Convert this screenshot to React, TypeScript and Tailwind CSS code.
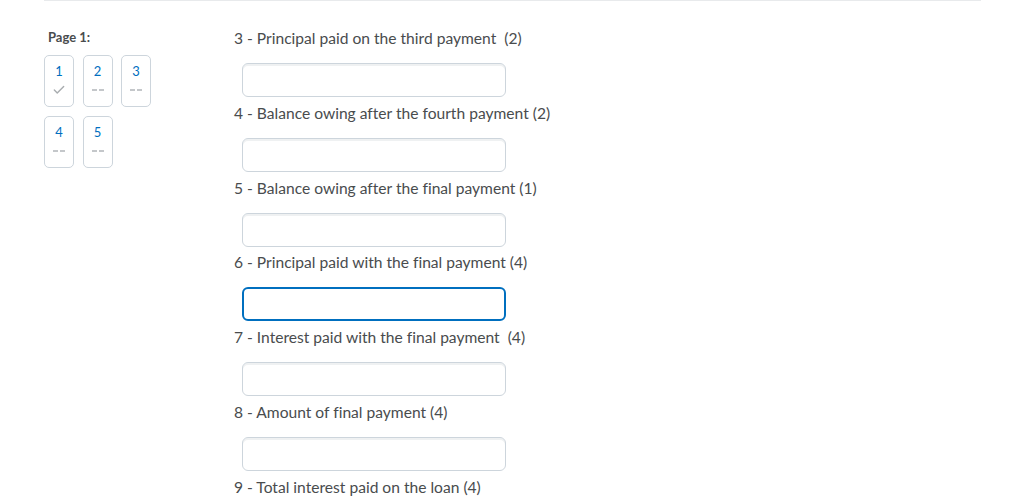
import { Check } from "lucide-react";

const questions = [
  { label: "3 - Principal paid on the third payment\u00a0 (2)" },
  { label: "4 - Balance owing after the fourth payment (2)" },
  { label: "5 - Balance owing after the final payment (1)" },
  { label: "6 - Principal paid with the final payment (4)", focused: true },
  { label: "7 - Interest paid with the final payment\u00a0 (4)" },
  { label: "8 - Amount of final payment (4)" },
  { label: "9 - Total interest paid on the loan (4)" },
];

const tiles = [
  [
    { n: 1, done: true },
    { n: 2, done: false },
    { n: 3, done: false },
  ],
  [
    { n: 4, done: false },
    { n: 5, done: false },
  ],
];

function Tile({ n, done }: { n: number; done: boolean }) {
  return (
    <div className="w-[30px] h-[52px] rounded-[5px] border border-[#cdd5dc] bg-white flex flex-col items-center pt-[6px]">
      <span className="text-[13px] leading-[19px] text-[#006fbf]">{n}</span>
      <div className="h-[18px] flex items-center justify-center">
        {done ? (
          <Check className="w-[14px] h-[14px] text-[#a8acaf]" strokeWidth={2.4} />
        ) : (
          <span className="flex gap-[2px]">
            <span className="w-[5px] h-[2px] bg-[#c4c7ca]" />
            <span className="w-[5px] h-[2px] bg-[#c4c7ca]" />
          </span>
        )}
      </div>
    </div>
  );
}

export default function App() {
  return (
    <div
      className="w-[1024px] h-[504px] bg-white overflow-hidden text-[#494c4e] [font-variant-ligatures:none]"
      style={{ fontFamily: "Lato, 'Noto Sans', sans-serif" }}
    >
      <div className="ml-[44px] w-[937px] border-t border-[#e8eaec] flex">
        {/* Left navigation */}
        <div className="w-[190px] shrink-0 pt-[27px]">
          <p className="pl-[4px] text-[13px] leading-[18px] font-bold text-[#494c4e]">
            Page 1:
          </p>
          <div className="mt-[9px] flex flex-col gap-[9px]">
            {tiles.map((row, i) => (
              <div key={i} className="flex gap-[8.5px]">
                {row.map((t) => (
                  <Tile key={t.n} n={t.n} done={t.done} />
                ))}
              </div>
            ))}
          </div>
        </div>

        {/* Questions */}
        <div className="pt-[26px]">
          {questions.map((q) => (
            <div key={q.label} className="mb-[4.8px]">
              <p className="text-[15.6px] leading-[22px] mb-[14px] whitespace-pre">
                {q.label}
              </p>
              <div className="ml-[8px]">
                <div
                  className={
                    q.focused
                      ? "w-[264px] h-[34px] rounded-[6px] border-2 border-[#006fbf] bg-white"
                      : "w-[264px] h-[34px] rounded-[6px] border border-[#cdd5dc] bg-white shadow-[inset_0_2px_0_0_rgba(177,185,190,0.2)]"
                  }
                />
              </div>
            </div>
          ))}
        </div>
      </div>
    </div>
  );
}
